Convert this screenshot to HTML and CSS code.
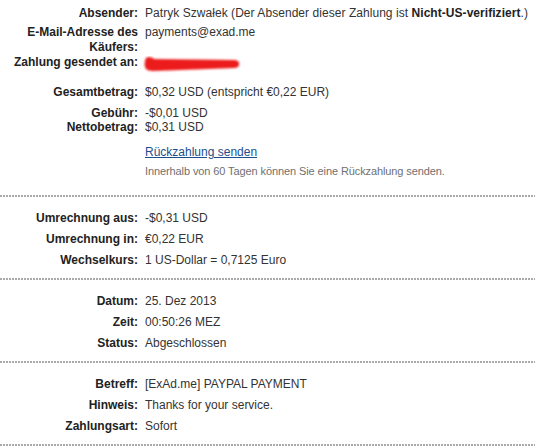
FILE: index.html
```html
<!DOCTYPE html>
<html lang="de">
<head>
<meta charset="utf-8">
<title>Zahlungsdetails</title>
<link rel="stylesheet" href="styles.css">
</head>
<body>
<div class="section first">
  <div class="row r-absender"><div class="lbl">Absender:</div><div class="val">Patryk Szwałek (Der Absender dieser Zahlung ist <b>Nicht-US-verifiziert</b>.)</div></div>
  <div class="row r-email"><div class="lbl">E-Mail-Adresse des Käufers:</div><div class="val">payments@exad.me</div></div>
  <div class="row r-zahlung"><div class="lbl">Zahlung gesendet an:</div><div class="val redacted">
    <svg class="brush" width="104" height="20" viewBox="0 0 104 20"><defs><filter id="bl" x="-10%" y="-50%" width="120%" height="200%"><feGaussianBlur stdDeviation="1"/></filter></defs><path d="M4 5 C4 0 10 0 13 3 L93 4 C100 4 100 12 93 12 L12 15 C4 15 3 11 4 5 Z" fill="#ec1c1c" filter="url(#bl)"/></svg>
  </div></div>
  <div class="row r-gesamt"><div class="lbl">Gesamtbetrag:</div><div class="val">$0,32 USD (entspricht €0,22 EUR)</div></div>
  <div class="row r-gebuehr"><div class="lbl">Gebühr:</div><div class="val">-$0,01 USD</div></div>
  <div class="row r-netto"><div class="lbl">Nettobetrag:</div><div class="val">$0,31 USD</div></div>
  <div class="row r-link"><div class="lbl"></div><div class="val"><a href="#">Rückzahlung senden</a></div></div>
  <div class="row r-note"><div class="lbl"></div><div class="val note">Innerhalb von 60 Tagen können Sie eine Rückzahlung senden.</div></div>
</div>
<div class="sep"></div>
<div class="section">
  <div class="row"><div class="lbl">Umrechnung aus:</div><div class="val">-$0,31 USD</div></div>
  <div class="row"><div class="lbl">Umrechnung in:</div><div class="val">€0,22 EUR</div></div>
  <div class="row"><div class="lbl">Wechselkurs:</div><div class="val">1 US-Dollar = 0,7125 Euro</div></div>
</div>
<div class="sep"></div>
<div class="section">
  <div class="row"><div class="lbl">Datum:</div><div class="val">25. Dez 2013</div></div>
  <div class="row"><div class="lbl">Zeit:</div><div class="val">00:50:26 MEZ</div></div>
  <div class="row"><div class="lbl">Status:</div><div class="val">Abgeschlossen</div></div>
</div>
<div class="sep"></div>
<div class="section">
  <div class="row"><div class="lbl">Betreff:</div><div class="val">[ExAd.me] PAYPAL PAYMENT</div></div>
  <div class="row"><div class="lbl">Hinweis:</div><div class="val">Thanks for your service.</div></div>
  <div class="row"><div class="lbl">Zahlungsart:</div><div class="val">Sofort</div></div>
</div>
<div class="sep"></div>
</body>
</html>
```

FILE: styles.css
```css
html, body {
  margin: 0;
  padding: 0;
  background: #ffffff;
}
body {
  width: 535px;
  font-family: "Liberation Sans", Arial, sans-serif;
  font-size: 12px;
  line-height: 14px;
  color: #333333;
  overflow: hidden;
}
.section {
  display: flex;
  flex-direction: column;
  gap: 7px;
  padding: 14px 0 11px;
}
.section.first {
  gap: 0;
  padding: 6px 0 17px;
}
.row {
  display: grid;
  grid-template-columns: 138px 1fr;
  column-gap: 7px;
}
.lbl {
  text-align: right;
  font-weight: bold;
  color: #222222;
}
.val {
  color: #333333;
  white-space: nowrap;
}
.r-absender .val {
  letter-spacing: 0.05px;
}
.val b {
  color: #222222;
}
.r-email { margin-top: 5px; }
.r-email .lbl { line-height: 15px; }
.r-gesamt { margin-top: 16px; }
.r-gebuehr { margin-top: 7px; }
.r-link { margin-top: 11px; }
.r-note { margin-top: 5px; }
.redacted {
  position: relative;
}
.brush {
  position: absolute;
  left: -4px;
  top: 1px;
}
a {
  color: #1b4f8d;
  text-decoration: underline;
}
.note {
  font-size: 11px;
  color: #707070;
  letter-spacing: -0.1px;
}
.sep {
  height: 2px;
  background: repeating-linear-gradient(to right, #aaaaaa 0 2px, transparent 2px 3px);
}
```
